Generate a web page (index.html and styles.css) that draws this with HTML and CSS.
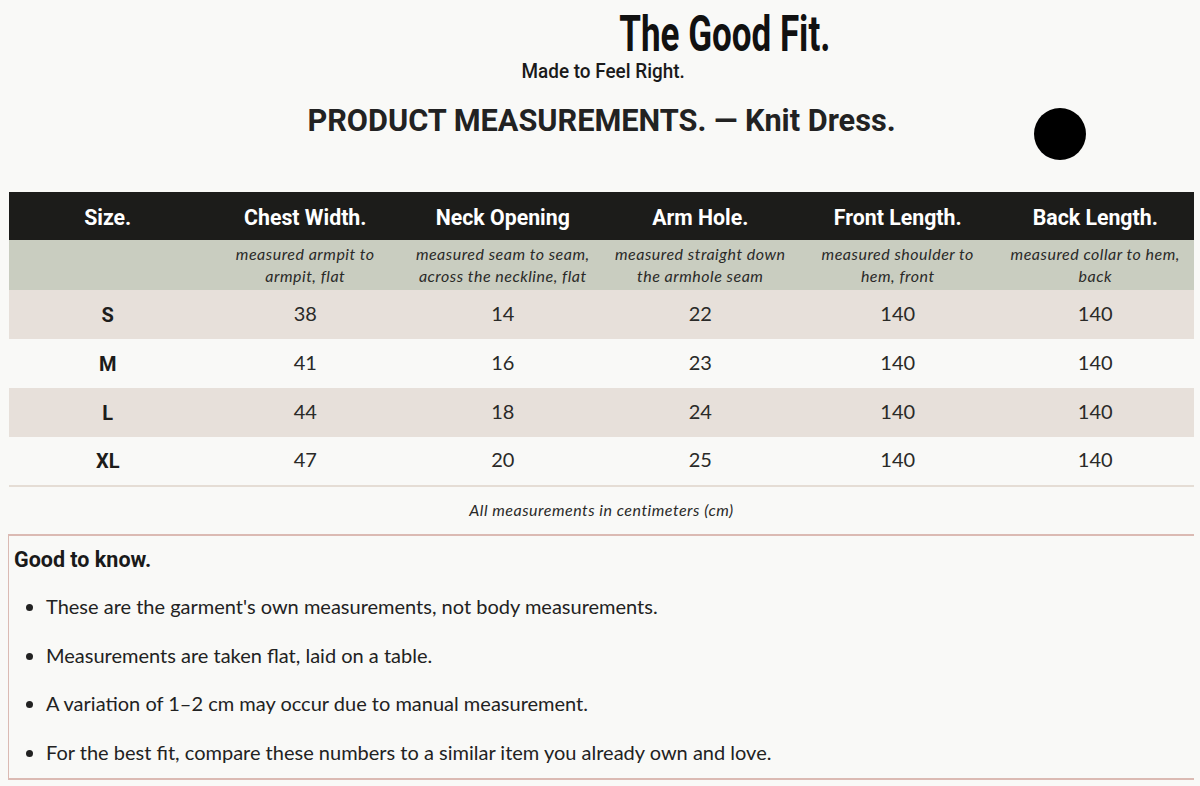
FILE: index.html
```html
<!DOCTYPE html>
<html lang="en">
<head>
<meta charset="utf-8">
<title>The Good Fit. — Product Measurements</title>
<link rel="stylesheet" href="styles.css">
</head>
<body>
<div class="page">
  <header class="brand">
    <div class="brand-title"><span class="din">The Good Fit.</span></div>
    <div class="brand-sub"><span class="din">Made to Feel Right.</span></div>
    <h1 class="heading"><span class="din">PRODUCT MEASUREMENTS. — Knit Dress.</span></h1>
    <span class="dot"></span>
  </header>

  <table class="sizes">
    <thead>
      <tr class="head-row">
        <th><span class="din">Size.</span></th>
        <th><span class="din">Chest Width.</span></th>
        <th><span class="din">Neck Opening</span></th>
        <th><span class="din">Arm Hole.</span></th>
        <th><span class="din">Front Length.</span></th>
        <th><span class="din">Back Length.</span></th>
      </tr>
      <tr class="desc-row">
        <td></td>
        <td>measured armpit to<br>armpit, flat</td>
        <td>measured seam to seam,<br>across the neckline, flat</td>
        <td>measured straight down<br>the armhole seam</td>
        <td>measured shoulder to<br>hem, front</td>
        <td>measured collar to hem,<br>back</td>
      </tr>
    </thead>
    <tbody>
      <tr class="alt"><th>S</th><td>38</td><td>14</td><td>22</td><td>140</td><td>140</td></tr>
      <tr><th>M</th><td>41</td><td>16</td><td>23</td><td>140</td><td>140</td></tr>
      <tr class="alt"><th>L</th><td>44</td><td>18</td><td>24</td><td>140</td><td>140</td></tr>
      <tr><th>XL</th><td>47</td><td>20</td><td>25</td><td>140</td><td>140</td></tr>
    </tbody>
  </table>

  <p class="note">All measurements in centimeters (cm)</p>

  <section class="know">
    <h2 class="know-title"><span class="din">Good to know.</span></h2>
    <ul class="know-list">
      <li>These are the garment's own measurements, not body measurements.</li>
      <li>Measurements are taken flat, laid on a table.</li>
      <li>A variation of 1–2 cm may occur due to manual measurement.</li>
      <li>For the best fit, compare these numbers to a similar item you already own and love.</li>
    </ul>
  </section>
</div>
</body>
</html>
```

FILE: styles.css
```css
html, body {
  margin: 0;
  padding: 0;
  background: #f9f9f7;
}

body {
  font-family: "Lato", "Noto Sans", sans-serif;
  color: #1d1d1b;
}

.page {
  padding: 0 6px 0 9px;
}

.din {
  display: inline-block;
  font-family: "Roboto", "Liberation Sans", sans-serif;
  font-weight: 700;
  transform-origin: center;
}

.brand {
  position: relative;
  height: 192px;
  text-align: center;
}

.brand-title {
  padding-top: 6px;
  padding-left: 246px;
  font-size: 50px;
  line-height: 52px;
  color: #111;
}

.brand-title .din {
  transform: scaleX(0.7);
}

.brand-sub {
  margin-top: 0;
  padding-left: 4px;
  font-size: 19.5px;
  line-height: 22px;
  color: #1a1a1a;
}

.brand-sub .din {
  font-weight: 500;
  transform: scaleX(0.97);
}

.heading {
  margin: 20px 0 0;
  font-size: 30.7px;
  line-height: 34px;
  color: #222;
}

.dot {
  position: absolute;
  left: 1025px;
  top: 108px;
  width: 52px;
  height: 52px;
  border-radius: 50%;
  background: #000;
}

.sizes {
  width: 100%;
  border-collapse: collapse;
  table-layout: fixed;
  text-align: center;
}

.head-row {
  background: #1c1c1a;
  color: #fff;
  height: 48px;
}

.head-row th {
  font-size: 21.3px;
  font-weight: 700;
  padding: 2px 0 0;
}

.desc-row {
  background: #c9cdc0;
  height: 50px;
}

.desc-row td {
  font-style: italic;
  font-size: 16px;
  letter-spacing: 0.5px;
  line-height: 22px;
  color: #2a2a28;
  padding: 2px 0 3px;
}

tbody tr {
  height: 49px;
  background: #f9f9f7;
}

tbody tr.alt {
  background: #e7e0da;
}

tbody tr:last-child {
  border-bottom: 2px solid #e5ddd5;
}

tbody th {
  font-family: "Roboto", "Liberation Sans", sans-serif;
  font-weight: 700;
  font-size: 20px;
  padding: 0;
}

tbody td {
  font-size: 20px;
  color: #2a2a28;
  padding: 0 0 4px;
}

.note {
  margin: 0;
  padding: 13px 0 0;
  height: 34px;
  text-align: center;
  font-style: italic;
  font-size: 16px;
  letter-spacing: 0.5px;
  line-height: 20px;
  color: #2a2a28;
}

.know {
  border: 2px solid #dbbab3;
  border-right: none;
  border-left-width: 1px;
  height: 242px;
  margin-left: -1px;
}

.know-title {
  margin: 0;
  padding: 10px 0 0 5px;
  font-size: 21.5px;
  line-height: 26px;
  color: #1a1a1a;
}

.know-list {
  margin: 0;
  padding: 22px 0 0 37px;
  font-size: 20px;
  line-height: 22px;
  color: #222;
}

.know-list li {
  margin-bottom: 26.7px;
}
```
